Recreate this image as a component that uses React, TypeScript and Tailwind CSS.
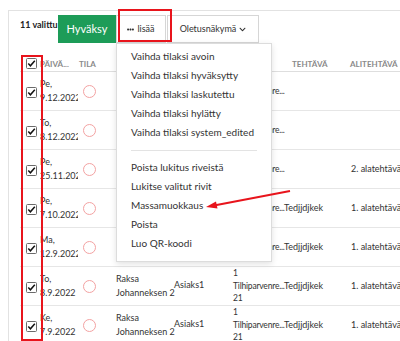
import React from 'react';
import { FaChevronDown, FaEllipsisH } from 'react-icons/fa';

type Row = {
  day: string;
  date: string;
  kohde?: string[];
  asiakas?: string;
  kuvaus: string[];
  tehtava?: string;
  alitehtava?: string;
};

const rows: Row[] = [
  { day: 'Pe,', date: '9.12.2022', kuvaus: ['Tilhiparvenre...'] },
  { day: 'To,', date: '8.12.2022', kuvaus: ['Tilhiparvenre...'] },
  { day: 'Pe,', date: '25.11.2022', kuvaus: ['Tilhiparvenre...'], alitehtava: '2. alatehtävä' },
  { day: 'Pe,', date: '7.10.2022', kuvaus: ['Tilhiparvenre...'], tehtava: 'Tedjjdjkek', alitehtava: '1. alatehtävä' },
  { day: 'Ma,', date: '12.9.2022', kuvaus: ['Tilhiparvenre...'], tehtava: 'Tedjjdjkek', alitehtava: '1. alatehtävä' },
  { day: 'To,', date: '8.9.2022', kohde: ['Raksa', 'Johanneksen 2'], asiakas: 'Asiaks1', kuvaus: ['1', 'Tilhiparvenre...', '21'], tehtava: 'Tedjjdjkek', alitehtava: '1. alatehtävä' },
  { day: 'Ke,', date: '7.9.2022', kohde: ['Raksa', 'Johanneksen 2'], asiakas: 'Asiaks1', kuvaus: ['1', 'Tilhiparvenre...', '21'], tehtava: 'Tedjjdjkek', alitehtava: '1. alatehtävä' },
];

const statusItems = [
  'Vaihda tilaksi avoin',
  'Vaihda tilaksi hyväksytty',
  'Vaihda tilaksi laskutettu',
  'Vaihda tilaksi hylätty',
  'Vaihda tilaksi system_edited',
];

const actionItems = ['Poista lukitus riveistä', 'Lukitse valitut rivit', 'Massamuokkaus', 'Poista', 'Luo QR-koodi'];

const cols = 'grid grid-cols-[20px_38px_35px_59px_61px_51px_66px_80px]';

const Checkbox: React.FC = () => (
  <svg width="11" height="11" viewBox="0 0 11 11">
    <rect x="0.5" y="0.5" width="10" height="10" rx="1" fill="#fff" stroke="#6b6b6b" />
    <path d="M2.3 5.6 L4.4 7.8 L8.8 2.8" fill="none" stroke="#111" strokeWidth="1.5" />
  </svg>
);

const App: React.FC = () => {
  return (
    <div className="relative w-[400px] h-[341px] overflow-hidden bg-white font-['Lato',sans-serif] text-[#333]">
      <div className="ml-[8px] mt-[10px] h-[331px] border-l border-t border-[#e2e2e2] pl-[11px] pt-[4px]">
        {/* toolbar */}
        <div className="flex items-start h-[28px]">
          <div className="w-[38px] overflow-hidden whitespace-nowrap pt-[4px] text-[9px] font-bold leading-[12px] text-[#222]">
            11 valittu
          </div>
          <button className="flex h-[28px] w-[58px] items-center justify-center bg-[#1d9c58] text-[11px] text-white">
            Hyväksy
          </button>
          <div className="relative">
            <button className="flex h-[28px] w-[50px] items-center justify-center gap-[3px] border border-[#d6d6d6] bg-white text-[9px] text-[#333]">
              <FaEllipsisH size={7} />
              <span>lisää</span>
            </button>
            <div className="absolute left-0 top-full z-10 h-[219px] w-[156px] border border-[#dcdcdc] bg-white pt-[3px] shadow-[0_2px_6px_rgba(0,0,0,0.12)]">
              {statusItems.map((t) => (
                <div key={t} className="flex h-[19px] items-center whitespace-nowrap pl-[14px] text-[10px] text-[#333]">
                  {t}
                </div>
              ))}
              <div className="mx-[14px] mb-[7px] mt-[8px] h-px bg-[#e3e3e3]" />
              {actionItems.map((t) => (
                <div key={t} className="flex h-[19px] items-center whitespace-nowrap pl-[14px] text-[10px] text-[#333]">
                  {t}
                </div>
              ))}
            </div>
          </div>
          <button className="ml-[1px] flex h-[28px] w-[92px] items-center justify-center gap-[3px] border border-[#d6d6d6] bg-white text-[9px] text-[#333]">
            <span>Oletusnäkymä</span>
            <FaChevronDown size={7} />
          </button>
        </div>

        {/* header */}
        <div className={`${cols} mt-[13px] h-[16px] items-center border-b border-[#dedede] text-[8px] font-bold uppercase text-[#8a8a8a]`}>
          <div className="pl-[6px]">
            <Checkbox />
          </div>
          <div className="whitespace-nowrap">Päivä...</div>
          <div className="pl-[1px]">Tila</div>
          <div />
          <div />
          <div />
          <div className="pl-[8px]">Tehtävä</div>
          <div className="whitespace-nowrap">Alitehtävä</div>
        </div>

        {/* rows */}
        {rows.map((r, i) => (
          <div key={i} className={`${cols} h-[39px] items-center border-b border-[#e6e6e6] text-[9px] leading-[12.5px] text-[#333]`}>
            <div className="pl-[6px] pt-[2px]">
              <Checkbox />
            </div>
            <div className="overflow-hidden whitespace-nowrap leading-[14px]">
              <div>{r.day}</div>
              <div>{r.date}</div>
            </div>
            <div className="pl-[5px]">
              <div className="h-[13px] w-[13px] rounded-full border-[1.5px] border-[#f3a2a2]" />
            </div>
            <div className="pl-[3px] leading-[14px] whitespace-nowrap">
              {r.kohde?.map((k) => (
                <div key={k}>{k}</div>
              ))}
            </div>
            <div className="pl-[2px] pb-[2px]">{r.asiakas}</div>
            <div className="whitespace-nowrap text-[8.5px] tracking-[-0.2px]">
              {r.kuvaus.map((k) => (
                <div key={k}>{k}</div>
              ))}
            </div>
            <div className="whitespace-nowrap">{r.tehtava}</div>
            <div className="whitespace-nowrap pl-[1px]">{r.alitehtava}</div>
          </div>
        ))}
      </div>

      {/* annotations */}
      <div className="pointer-events-none absolute left-[118px] top-[9px] z-20 h-[33px] w-[54px] border-2 border-[#e8141c]" />
      <div className="pointer-events-none absolute left-[21px] top-[55px] z-20 h-[286px] w-[22px] border-2 border-[#e8141c]" />
      <svg className="pointer-events-none absolute left-0 top-0 z-20" width="400" height="341">
        <line x1="290" y1="191" x2="214" y2="205.5" stroke="#e8141c" strokeWidth="2" />
        <polygon points="206,207 216,201.5 217.5,208.5" fill="#e8141c" />
      </svg>
    </div>
  );
};

export default App;
